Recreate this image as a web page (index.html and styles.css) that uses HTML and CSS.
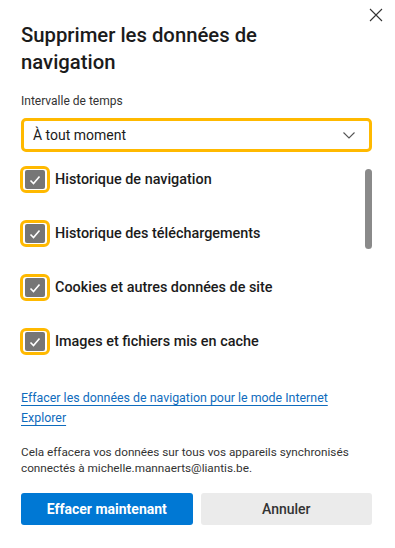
FILE: index.html
```html
<!DOCTYPE html>
<html lang="fr">
<head>
<meta charset="utf-8">
<link rel="stylesheet" href="styles.css">
</head>
<body>
<div class="dialog">
  <button class="close" aria-label="Fermer">
    <svg width="14" height="14" viewBox="0 0 14 14"><path d="M1 1L13 13M13 1L1 13" stroke="#333" stroke-width="1.1" fill="none"/></svg>
  </button>
  <h1 class="title">Supprimer les données de navigation</h1>
  <div class="label">Intervalle de temps</div>
  <div class="select">
    <span>À tout moment</span>
    <svg width="12" height="7" viewBox="0 0 12 7"><path d="M0.5 0.5L6 6L11.5 0.5" stroke="#555" stroke-width="1.1" fill="none"/></svg>
  </div>
  <div class="list">
    <div class="items">
      <label class="item"><span class="ring"><span class="box"><svg width="14" height="14" viewBox="0 0 14 14"><path d="M2.5 7.5L5.5 10.5L11.5 3.5" stroke="#fff" stroke-width="1.6" fill="none"/></svg></span></span><span class="text">Historique de navigation</span></label>
      <label class="item"><span class="ring"><span class="box"><svg width="14" height="14" viewBox="0 0 14 14"><path d="M2.5 7.5L5.5 10.5L11.5 3.5" stroke="#fff" stroke-width="1.6" fill="none"/></svg></span></span><span class="text">Historique des téléchargements</span></label>
      <label class="item"><span class="ring"><span class="box"><svg width="14" height="14" viewBox="0 0 14 14"><path d="M2.5 7.5L5.5 10.5L11.5 3.5" stroke="#fff" stroke-width="1.6" fill="none"/></svg></span></span><span class="text">Cookies et autres données de site</span></label>
      <label class="item"><span class="ring"><span class="box"><svg width="14" height="14" viewBox="0 0 14 14"><path d="M2.5 7.5L5.5 10.5L11.5 3.5" stroke="#fff" stroke-width="1.6" fill="none"/></svg></span></span><span class="text">Images et fichiers mis en cache</span></label>
    </div>
    <div class="scrollbar"><div class="thumb"></div></div>
  </div>
  <a class="link" href="#">Effacer les données de navigation pour le mode Internet Explorer</a>
  <p class="desc">Cela effacera vos données sur tous vos appareils synchronisés connectés à michelle.mannaerts@liantis.be.</p>
  <div class="buttons">
    <button class="btn primary">Effacer maintenant</button>
    <button class="btn secondary">Annuler</button>
  </div>
</div>
</body>
</html>
```
FILE: styles.css
```css
* { box-sizing: border-box; }
html, body { margin: 0; padding: 0; background: #fff; }
body { font-family: Roboto, "Noto Sans", sans-serif; color: #1b1b1b; }
.dialog {
  position: relative;
  width: 395px;
  height: 548px;
  padding: 22px 23px 0 21px;
  display: flex;
  flex-direction: column;
}
.close {
  position: absolute;
  top: 7px;
  right: 11px;
  width: 16px;
  height: 16px;
  padding: 1px;
  border: 0;
  background: transparent;
  display: flex;
}
.title {
  margin: 0;
  font-size: 20.3px;
  line-height: 27px;
  font-weight: 500;
  color: #1b1b1b;
  width: 280px;
}
.label {
  margin-top: 17px;
  font-size: 12px;
  line-height: 16px;
  color: #333;
}
.select {
  margin-top: 9px;
  height: 34px;
  border: 3px solid #ffb900;
  border-radius: 5px;
  padding: 0 14px 0 9px;
  display: flex;
  align-items: center;
  justify-content: space-between;
  font-size: 14px;
  color: #1b1b1b;
}
.list {
  margin-top: 14px;
  display: flex;
  justify-content: space-between;
  height: 200px;
}
.items {
  display: flex;
  flex-direction: column;
  gap: 27px;
}
.item {
  display: flex;
  align-items: center;
  gap: 5px;
  height: 27px;
}
.ring {
  width: 30px;
  height: 27px;
  border: 3px solid #ffb900;
  border-radius: 6px;
  padding: 1px;
  margin-left: -1px;
  display: flex;
  align-items: center;
  justify-content: center;
}
.box {
  width: 20px;
  height: 19px;
  background: #767676;
  border-radius: 2px;
  display: flex;
  align-items: center;
  justify-content: center;
}
.text {
  font-size: 14.4px;
  font-weight: 500;
  color: #1b1b1b;
}
.scrollbar {
  width: 7px;
  padding-top: 3px;
}
.thumb {
  width: 7px;
  height: 80px;
  background: #8a8a8a;
  border-radius: 4px;
}
.link {
  margin-top: 22px;
  font-size: 12.4px;
  line-height: 20px;
  color: #0f6cbd;
  text-decoration: underline;
  text-underline-offset: 3px;
  width: 320px;
}
.desc {
  margin: 16px 0 0;
  font-size: 11.75px;
  line-height: 16px;
  color: #333;
}
.buttons {
  margin-top: 17px;
  display: grid;
  grid-template-columns: 1fr 1fr;
  gap: 8px;
}
.btn {
  height: 32px;
  border: 0;
  border-radius: 3px;
  font-family: inherit;
  font-size: 14px;
  font-weight: 700;
}
.primary { background: #0078d4; color: #fff; }
.secondary { background: #ebebeb; color: #333; font-weight: 500; }
```
